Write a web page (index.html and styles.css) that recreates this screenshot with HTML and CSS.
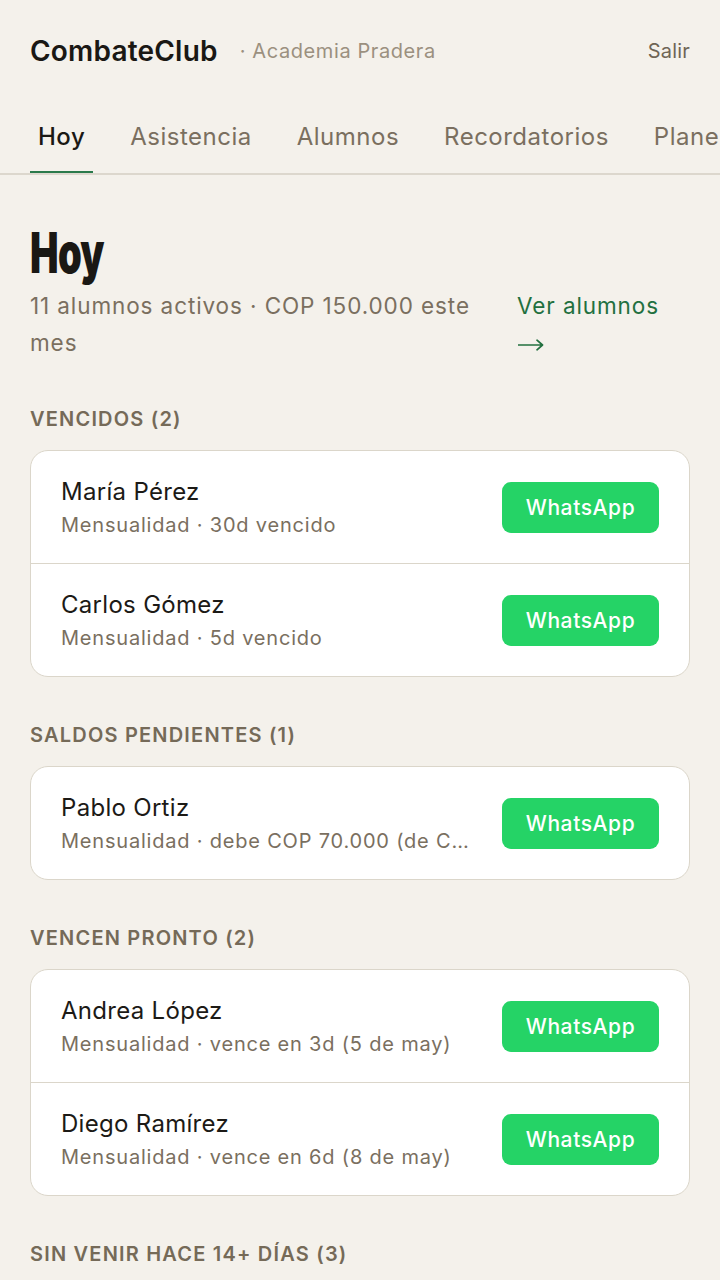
FILE: index.html
```html
<!DOCTYPE html>
<html lang="es">
<head>
<meta charset="utf-8">
<title>CombateClub · Hoy</title>
<link rel="stylesheet" href="styles.css">
</head>
<body>
<header class="topbar">
  <span class="brand">CombateClub</span>
  <span class="org">· Academia Pradera</span>
  <a class="logout" href="#">Salir</a>
</header>
<nav class="tabs">
  <a class="tab active" href="#">Hoy</a>
  <a class="tab" href="#">Asistencia</a>
  <a class="tab" href="#">Alumnos</a>
  <a class="tab" href="#">Recordatorios</a>
  <a class="tab" href="#">Planes</a>
</nav>
<main class="page">
  <h1 class="title">Hoy</h1>
  <div class="summary">
    <p class="summary-text">11 alumnos activos · COP 150.000 este mes</p>
    <a class="summary-link" href="#">Ver alumnos <svg class="arrow" width="26" height="12" viewBox="0 0 26 12" aria-label="→"><path d="M0.5 6H24.5M19 1.2L24.5 6L19 10.8" fill="none" stroke="currentColor" stroke-width="1.7" stroke-linecap="round" stroke-linejoin="round"/></svg></a>
  </div>

  <section class="group">
    <h2 class="group-label">Vencidos (2)</h2>
    <div class="card">
      <div class="row">
        <div class="info"><div class="name">María Pérez</div><div class="sub">Mensualidad · 30d vencido</div></div>
        <a class="wa" href="#">WhatsApp</a>
      </div>
      <div class="row">
        <div class="info"><div class="name">Carlos Gómez</div><div class="sub">Mensualidad · 5d vencido</div></div>
        <a class="wa" href="#">WhatsApp</a>
      </div>
    </div>
  </section>

  <section class="group">
    <h2 class="group-label">Saldos pendientes (1)</h2>
    <div class="card">
      <div class="row">
        <div class="info"><div class="name">Pablo Ortiz</div><div class="sub">Mensualidad · debe COP 70.000 (de COP 150.000)</div></div>
        <a class="wa" href="#">WhatsApp</a>
      </div>
    </div>
  </section>

  <section class="group">
    <h2 class="group-label">Vencen pronto (2)</h2>
    <div class="card">
      <div class="row">
        <div class="info"><div class="name">Andrea López</div><div class="sub">Mensualidad · vence en 3d (5 de may)</div></div>
        <a class="wa" href="#">WhatsApp</a>
      </div>
      <div class="row">
        <div class="info"><div class="name">Diego Ramírez</div><div class="sub">Mensualidad · vence en 6d (8 de may)</div></div>
        <a class="wa" href="#">WhatsApp</a>
      </div>
    </div>
  </section>

  <section class="group">
    <h2 class="group-label">Sin venir hace 14+ días (3)</h2>
  </section>
</main>
</body>
</html>
```
FILE: styles.css
```css
* { box-sizing: border-box; }
html, body { margin: 0; padding: 0; }
body {
  background: #f4f1eb;
  color: #1c1a16;
  font-family: Inter, "Noto Sans", sans-serif;
  overflow-x: hidden;
}
a { text-decoration: none; }

.topbar {
  display: flex;
  align-items: center;
  height: 102px;
  padding: 0 30px;
}
.brand {
  font-size: 28px;
  font-weight: 600;
  letter-spacing: 0.2px;
  color: #1a1814;
}
.org {
  margin-left: 22px;
  font-size: 20px;
  letter-spacing: 0.6px;
  color: #9b907f;
}
.logout {
  margin-left: auto;
  font-size: 20px;
  letter-spacing: 0.2px;
  color: #6f6555;
}

.tabs {
  display: flex;
  gap: 29px;
  padding: 0 30px;
  border-bottom: 2px solid #dcd7cd;
  white-space: nowrap;
  overflow: hidden;
}
.tab {
  flex: none;
  padding: 20px 8px 19px;
  line-height: 30px;
  font-size: 24px;
  letter-spacing: 0.5px;
  color: #7a6f5f;
  border-bottom: 3px solid transparent;
  margin-bottom: -1px;
}
.tab.active {
  color: #1a1814;
  font-weight: 500;
  border-bottom-color: #2a7a4b;
}

.page {
  padding: 50px 30px 40px;
}
.title {
  display: inline-block;
  margin: 0;
  font-family: Inter, sans-serif;
  font-weight: 900;
  font-size: 56px;
  line-height: 1;
  letter-spacing: -1px;
  color: #1a1814;
  transform: scaleX(0.68);
  transform-origin: left center;
}
.summary {
  display: flex;
  align-items: flex-start;
  gap: 20px;
  margin-top: 6px;
}
.summary-text {
  flex: 1;
  margin: 0;
  font-size: 22.5px;
  line-height: 37px;
  letter-spacing: 0.9px;
  color: #7a6f5f;
}
.summary-link {
  flex: none;
  width: 173px;
  padding-right: 14px;
  font-size: 22.5px;
  line-height: 37px;
  letter-spacing: 0.9px;
  color: #22703f;
}
.arrow {
  display: inline-block;
  vertical-align: middle;
  margin-left: 1px;
}

.group { margin-top: 46px; }
.group-label {
  margin: 0 0 19px;
  font-size: 20px;
  line-height: 24px;
  font-weight: 600;
  text-transform: uppercase;
  letter-spacing: 1.2px;
  color: #756a58;
}
.card {
  background: #ffffff;
  border: 1.5px solid #dbd6ca;
  border-radius: 18px;
  overflow: hidden;
}
.row {
  display: flex;
  align-items: center;
  gap: 30px;
  padding: 25px 30px;
}
.row + .row { border-top: 1.5px solid #dbd6ca; }
.info {
  flex: 1;
  min-width: 0;
}
.name {
  font-size: 24px;
  line-height: 32px;
  letter-spacing: 0.3px;
  color: #1c1a16;
}
.sub {
  margin-top: 4px;
  font-size: 20px;
  line-height: 26px;
  letter-spacing: 0.8px;
  color: #7a6f5f;
  white-space: nowrap;
  overflow: hidden;
  text-overflow: ellipsis;
}
.wa {
  flex: none;
  width: 157px;
  height: 51px;
  display: flex;
  align-items: center;
  justify-content: center;
  background: #25d366;
  color: #ffffff;
  border-radius: 9px;
  font-size: 21px;
  font-weight: 500;
  letter-spacing: 0.6px;
}
```
